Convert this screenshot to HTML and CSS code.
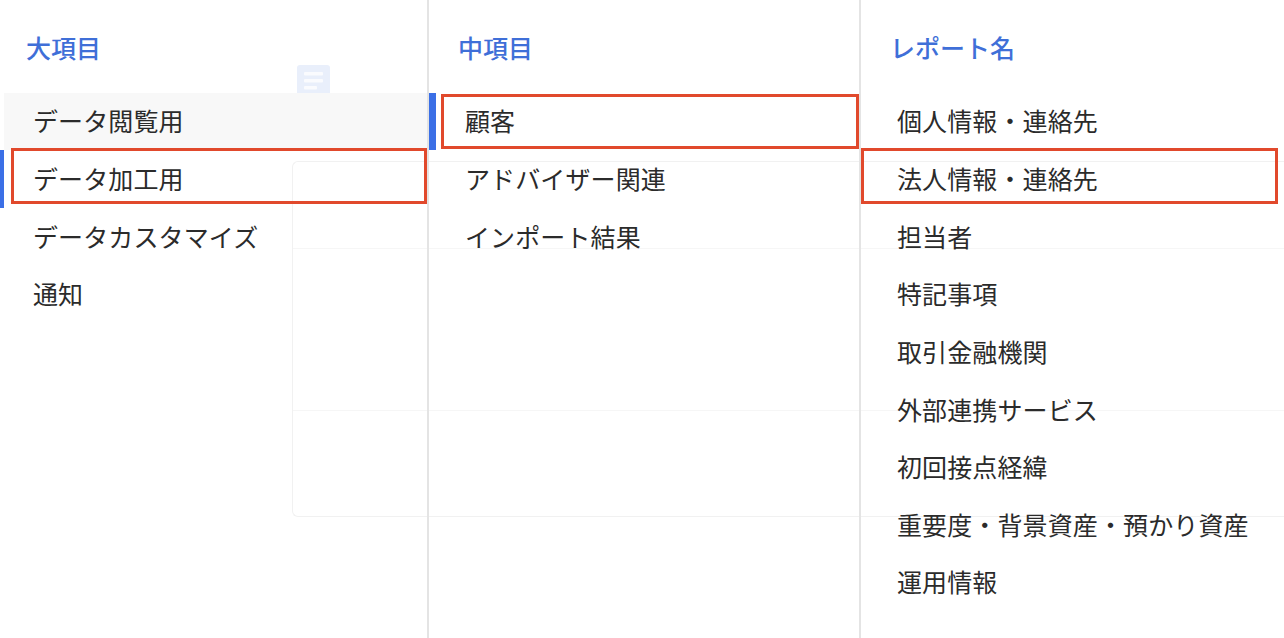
FILE: index.html
```html
<!DOCTYPE html>
<html lang="ja">
<head>
    <meta charset="UTF-8">
    <title>レポート選択</title>
    <link rel="stylesheet" href="styles.css">
</head>
<body>
    <div class="ghost-card">
        <div class="ghost-line ghost-line-top"></div>
        <div class="ghost-line ghost-line-bottom"></div>
    </div>
    <div class="ghost-icon">
        <svg width="33" height="33" viewBox="0 0 33 33">
            <rect width="33" height="33" rx="3" fill="#e9effb"/>
            <rect x="7" y="7" width="19" height="3.5" rx="1" fill="#fafbfe"/>
            <rect x="7" y="14" width="19" height="3.5" rx="1" fill="#fafbfe"/>
            <rect x="7" y="21" width="13" height="3.5" rx="1" fill="#fafbfe"/>
        </svg>
    </div>

    <div class="columns">
        <section class="column column-large">
            <h2>大項目</h2>
            <ul>
                <li class="hover">データ閲覧用</li>
                <li class="active">データ加工用<span class="mark"></span></li>
                <li>データカスタマイズ</li>
                <li>通知</li>
            </ul>
        </section>

        <section class="column column-middle">
            <h2>中項目</h2>
            <ul>
                <li class="active">顧客<span class="mark"></span></li>
                <li>アドバイザー関連</li>
                <li>インポート結果</li>
            </ul>
        </section>

        <section class="column column-report">
            <h2>レポート名</h2>
            <ul>
                <li>個人情報・連絡先</li>
                <li>法人情報・連絡先<span class="mark"></span></li>
                <li>担当者</li>
                <li>特記事項</li>
                <li>取引金融機関</li>
                <li>外部連携サービス</li>
                <li>初回接点経緯</li>
                <li>重要度・背景資産・預かり資産</li>
                <li>運用情報</li>
            </ul>
        </section>
    </div>
</body>
</html>
```

FILE: styles.css
```css
html, body {
    margin: 0;
    height: 638px;
    overflow: hidden;
    background: #fff;
}

body {
    position: relative;
    font-family: "Noto Sans CJK JP", "Noto Sans", sans-serif;
    color: #2b2b2b;
}

.columns {
    position: relative;
    display: flex;
    height: 638px;
}

.column {
    box-sizing: border-box;
    flex: none;
}

.column-large {
    width: 429px;
    border-right: 2px solid #e4e4e4;
}

.column-middle {
    width: 432px;
    border-right: 2px solid #e4e4e4;
}

.column-report {
    flex: 1;
}

h2 {
    margin: 0;
    height: 92.6px;
    box-sizing: border-box;
    padding-top: 29px;
    font-size: 25px;
    line-height: 37px;
    font-weight: 500;
    color: #3f6fd8;
}

.column-large h2 { padding-left: 26px; }
.column-middle h2 { padding-left: 29px; }
.column-report h2 { padding-left: 29px; }

ul {
    margin: 0;
    padding: 0;
    list-style: none;
}

li {
    position: relative;
    height: 57.6px;
    font-size: 25px;
    line-height: 56px;
    letter-spacing: 0.12px;
}

li:first-child {
    line-height: 55px;
}

.column-large li { padding-left: 33px; }
.column-middle li { padding-left: 36px; }
.column-report li { padding-left: 36px; }

.column-large .hover {
    margin-left: 4px;
    padding-left: 29px;
    background: #f8f8f8;
}

.active::before {
    content: "";
    position: absolute;
    left: 0;
    top: 0;
    bottom: 0;
    width: 4px;
    background: #3b6fe6;
}

.column-middle .active::before {
    width: 7px;
}

.mark {
    position: absolute;
    box-sizing: border-box;
    height: 56px;
    border: 3px solid #e1492c;
}

.column-large .mark {
    left: 11px;
    right: 0;
    top: -2.2px;
}

.column-middle .mark {
    left: 12px;
    right: 0;
    top: 1px;
    height: 55px;
}

.column-report .mark {
    left: 0;
    right: 6px;
    top: -2.2px;
}

/* faded page showing through behind the dialog */
.ghost-card {
    position: absolute;
    left: 292px;
    top: 161px;
    right: 0;
    height: 356px;
    box-sizing: border-box;
    border: 1px solid #f1f1f1;
    border-right: none;
    border-radius: 6px 0 0 6px;
}

.ghost-line {
    position: absolute;
    left: 0;
    right: 0;
    height: 1px;
    background: #f6f6f6;
}

.ghost-line-top { top: 86px; }
.ghost-line-bottom { top: 248px; }

.ghost-icon {
    position: absolute;
    left: 297px;
    top: 65px;
    width: 33px;
    height: 33px;
}
```
